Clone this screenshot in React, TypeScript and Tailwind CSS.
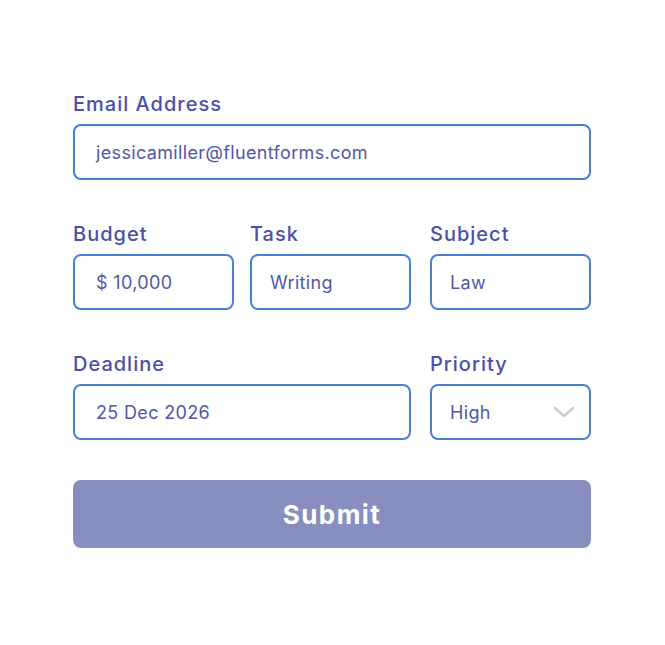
import React from "react";

const labelCls =
  "block h-7 leading-7 text-[20px] font-medium text-[#4b4fa6] mb-[6px] tracking-[1px]";
const boxBase =
  "h-[56px] border-2 border-[#4d7ed6] rounded-[8px] flex items-center text-[18px] text-[#5256a6] bg-white tracking-[0.35px]";
const boxA = boxBase + " pl-[21px]";
const boxB = boxBase + " pl-[18px]";

export default function App() {
  return (
    <div
      className="w-[665px] h-[645px] bg-white pt-[90px] pl-[73px]"
      style={{ fontFamily: "Inter, 'Noto Sans', sans-serif" }}
    >
      <div className="w-[518px] flex flex-col gap-[40px]">
        <div>
          <span className={labelCls}>Email Address</span>
          <div className={boxA}>jessicamiller@fluentforms.com</div>
        </div>
        <div className="flex">
          <div className="w-[161px]">
            <span className={labelCls}>Budget</span>
            <div className={boxA}>$ 10,000</div>
          </div>
          <div className="w-[161px] ml-[16px]">
            <span className={labelCls}>Task</span>
            <div className={boxB}>Writing</div>
          </div>
          <div className="w-[161px] ml-[19px]">
            <span className={labelCls}>Subject</span>
            <div className={boxB}>Law</div>
          </div>
        </div>
        <div className="flex">
          <div className="w-[338px]">
            <span className={labelCls}>Deadline</span>
            <div className={boxA}>25 Dec 2026</div>
          </div>
          <div className="w-[161px] ml-[19px]">
            <span className={labelCls}>Priority</span>
            <div className={boxB + " justify-between pr-[14px]"}>
              <span>High</span>
              <svg width="22" height="12" viewBox="0 0 22 12" fill="none">
                <path
                  d="M2 2 L11 10 L20 2"
                  stroke="#c9cad2"
                  strokeWidth="2.4"
                  strokeLinecap="round"
                  strokeLinejoin="round"
                />
              </svg>
            </div>
          </div>
        </div>
        <button className="h-[68px] w-[518px] rounded-[8px] bg-[#888ebd] text-white text-[26px] font-bold tracking-[1.4px]">
          Submit
        </button>
      </div>
    </div>
  );
}
